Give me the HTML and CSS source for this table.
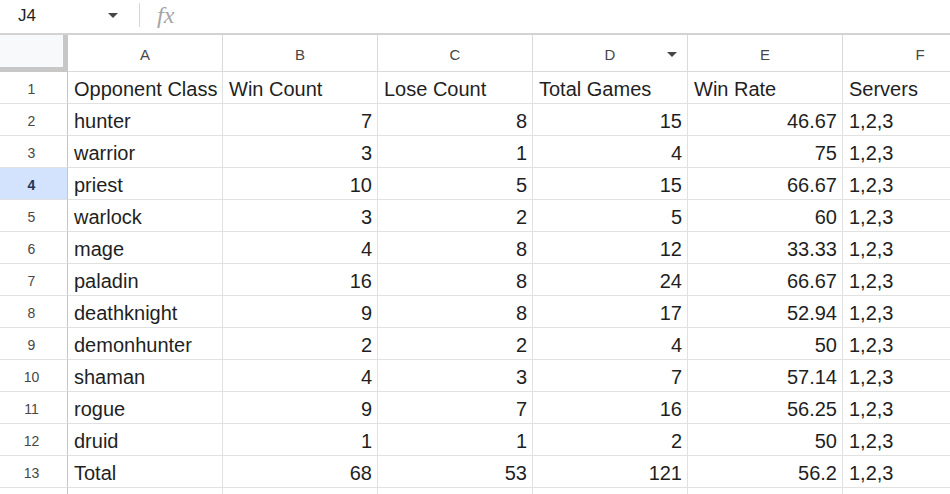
FILE: index.html
```html
<!DOCTYPE html>
<html>
<head>
<meta charset="utf-8">
<link rel="stylesheet" href="styles.css">
</head>
<body>
<div class="app">
<div class="topbar">
  <div class="namebox">
    <span class="ref">J4</span>
    <svg class="caret" width="10" height="5" viewBox="0 0 10 5"><path d="M0 0h10L5 5z" fill="#444746"/></svg>
  </div>
  <div class="sep"></div>
  <span class="fx">fx</span>
</div>
<div class="sheet">
  <div class="corner"></div>
  <div class="colhead">A</div>
  <div class="colhead">B</div>
  <div class="colhead">C</div>
  <div class="colhead filter">D<svg class="fcaret" width="10" height="5" viewBox="0 0 10 5"><path d="M0 0h10L5 5z" fill="#444746"/></svg></div>
  <div class="colhead">E</div>
  <div class="colhead">F</div>

  <div class="rowhead">1</div>
  <div class="cell">Opponent Class</div><div class="cell">Win Count</div><div class="cell">Lose Count</div><div class="cell">Total Games</div><div class="cell">Win Rate</div><div class="cell">Servers</div>

  <div class="rowhead">2</div>
  <div class="cell">hunter</div><div class="cell num">7</div><div class="cell num">8</div><div class="cell num">15</div><div class="cell num">46.67</div><div class="cell">1,2,3</div>

  <div class="rowhead">3</div>
  <div class="cell">warrior</div><div class="cell num">3</div><div class="cell num">1</div><div class="cell num">4</div><div class="cell num">75</div><div class="cell">1,2,3</div>

  <div class="rowhead sel">4</div>
  <div class="cell">priest</div><div class="cell num">10</div><div class="cell num">5</div><div class="cell num">15</div><div class="cell num">66.67</div><div class="cell">1,2,3</div>

  <div class="rowhead">5</div>
  <div class="cell">warlock</div><div class="cell num">3</div><div class="cell num">2</div><div class="cell num">5</div><div class="cell num">60</div><div class="cell">1,2,3</div>

  <div class="rowhead">6</div>
  <div class="cell">mage</div><div class="cell num">4</div><div class="cell num">8</div><div class="cell num">12</div><div class="cell num">33.33</div><div class="cell">1,2,3</div>

  <div class="rowhead">7</div>
  <div class="cell">paladin</div><div class="cell num">16</div><div class="cell num">8</div><div class="cell num">24</div><div class="cell num">66.67</div><div class="cell">1,2,3</div>

  <div class="rowhead">8</div>
  <div class="cell">deathknight</div><div class="cell num">9</div><div class="cell num">8</div><div class="cell num">17</div><div class="cell num">52.94</div><div class="cell">1,2,3</div>

  <div class="rowhead">9</div>
  <div class="cell">demonhunter</div><div class="cell num">2</div><div class="cell num">2</div><div class="cell num">4</div><div class="cell num">50</div><div class="cell">1,2,3</div>

  <div class="rowhead">10</div>
  <div class="cell">shaman</div><div class="cell num">4</div><div class="cell num">3</div><div class="cell num">7</div><div class="cell num">57.14</div><div class="cell">1,2,3</div>

  <div class="rowhead">11</div>
  <div class="cell">rogue</div><div class="cell num">9</div><div class="cell num">7</div><div class="cell num">16</div><div class="cell num">56.25</div><div class="cell">1,2,3</div>

  <div class="rowhead">12</div>
  <div class="cell">druid</div><div class="cell num">1</div><div class="cell num">1</div><div class="cell num">2</div><div class="cell num">50</div><div class="cell">1,2,3</div>

  <div class="rowhead">13</div>
  <div class="cell">Total</div><div class="cell num">68</div><div class="cell num">53</div><div class="cell num">121</div><div class="cell num">56.2</div><div class="cell">1,2,3</div>

  <div class="rowhead"></div>
  <div class="cell"></div><div class="cell"></div><div class="cell"></div><div class="cell"></div><div class="cell"></div><div class="cell"></div>
</div>
</div>
</body>
</html>
```
FILE: styles.css
```css
html, body {
  margin: 0;
  padding: 0;
  background: #ffffff;
}
body {
  font-family: "Liberation Sans", Arial, sans-serif;
  color: #1f1f1f;
}
.app {
  width: 950px;
  height: 494px;
  overflow: hidden;
}
.topbar {
  height: 33px;
  border-bottom: 2px solid #d3d3d3;
  display: flex;
  align-items: center;
}
.namebox {
  width: 125px;
  display: flex;
  align-items: center;
  padding-left: 18px;
  box-sizing: border-box;
}
.ref {
  font-size: 17px;
  color: #1f1f1f;
  flex: 1;
  margin-top: -2px;
}
.caret {
  margin-right: 7px;
  margin-top: -3px;
}
.sep {
  width: 1px;
  height: 24px;
  background: #d6d6d6;
  margin-left: 14px;
  margin-top: -4px;
}
.fx {
  font-family: "Liberation Serif", "Times New Roman", serif;
  font-style: italic;
  font-size: 24px;
  color: #a5a5a5;
  margin-left: 17px;
  margin-top: -2px;
  letter-spacing: 0;
}
.sheet {
  display: grid;
  grid-template-columns: 68px repeat(6, 155px);
  grid-template-rows: 37px repeat(14, 32px);
  width: 998px;
}
.corner {
  background: #f8f9fa;
  border-right: 5px solid #c7c7c7;
  border-bottom: 5px solid #c7c7c7;
  box-sizing: border-box;
}
.colhead {
  box-sizing: border-box;
  border-right: 1px solid #dadada;
  border-bottom: 1px solid #dadada;
  display: flex;
  align-items: center;
  justify-content: center;
  font-size: 15px;
  color: #474747;
  padding-top: 2px;
  position: relative;
}
.fcaret {
  position: absolute;
  right: 10px;
  top: 17px;
}
.rowhead {
  box-sizing: border-box;
  border-right: 1px solid #c7c7c7;
  border-bottom: 1px solid #e1e1e1;
  display: flex;
  align-items: center;
  justify-content: center;
  font-size: 14px;
  color: #474747;
  padding-right: 4px;
  padding-top: 2px;
}
.rowhead.sel {
  background: #d3e3fd;
  color: #243553;
  font-weight: bold;
}
.cell {
  box-sizing: border-box;
  border-right: 1px solid #e1e1e1;
  border-bottom: 1px solid #e1e1e1;
  display: flex;
  align-items: flex-end;
  font-size: 20px;
  line-height: 23px;
  padding: 0 5px 2px 6px;
  white-space: nowrap;
}
.cell.num {
  justify-content: flex-end;
}
```
